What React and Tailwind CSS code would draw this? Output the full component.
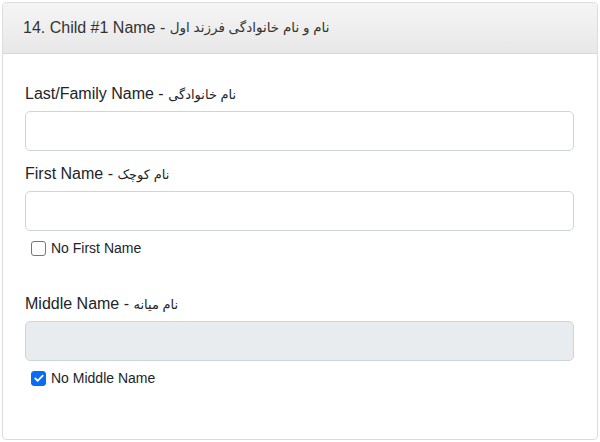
import { useState } from "react";

const FONT = { fontFamily: "'Liberation Sans', 'DejaVu Sans', Arial, sans-serif" };

function Field({ label, fa, disabled, gap = "mt-0" }) {
  return (
    <div className={gap}>
      <label className="block h-5 text-[16px] leading-5 text-[#212529]">
        {label} <span className="text-[13px] leading-none">{fa}</span>
      </label>
      <input
        disabled={disabled}
        className={`mt-[7px] block w-[549px] h-[40px] rounded-[5px] border border-[#ced4da] px-3 text-[16px] outline-none ${
          disabled ? "bg-[#e9ecef]" : "bg-white"
        }`}
      />
    </div>
  );
}

function Check({ checked, onChange, label }) {
  return (
    <label className="mt-[8px] ml-[6px] flex h-[18px] items-center gap-[5px] text-[14px] leading-[18px] text-[#212529]">
      <span
        onClick={onChange}
        className={`flex h-[15px] w-[15px] items-center justify-center rounded-[3px] border ${
          checked ? "border-[#0a6cf5] bg-[#0a6cf5]" : "border-[#767676] bg-white"
        }`}
      >
        {checked && (
          <svg viewBox="0 0 16 16" className="h-[12px] w-[12px]">
            <path d="M3 8.5l3.2 3.2L13 4.8" fill="none" stroke="white" strokeWidth="2.4" strokeLinecap="round" strokeLinejoin="round" />
          </svg>
        )}
      </span>
      {label}
    </label>
  );
}

export default function App() {
  const [noFirst, setNoFirst] = useState(false);
  const [noMiddle, setNoMiddle] = useState(true);

  return (
    <div style={FONT} className="h-[442px] w-[600px] bg-white p-[2px]">
      <div className="h-[438px] rounded-[4px] border border-[#dddddd] overflow-hidden">
        <div className="flex h-[51px] items-center border-b border-[#d8d8d8] bg-gradient-to-b from-[#f5f5f5] to-[#e8e8e8] px-[20px] text-[16px] text-[#333]">
          14. Child #1 Name -&nbsp;<span className="text-[13.5px]">نام و نام خانوادگی فرزند اول</span>
        </div>
        <div className="px-[22px] pt-[30px]">
          <Field label="Last/Family Name -" fa="نام خانوادگی" />
          <Field label="First Name -" fa="نام کوچک" gap="mt-[13px]" />
          <Check checked={noFirst} onChange={() => setNoFirst(!noFirst)} label="No First Name" />
          <Field label="Middle Name -" fa="نام میانه" disabled={noMiddle} gap="mt-[37px]" />
          <Check checked={noMiddle} onChange={() => setNoMiddle(!noMiddle)} label="No Middle Name" />
        </div>
      </div>
    </div>
  );
}
